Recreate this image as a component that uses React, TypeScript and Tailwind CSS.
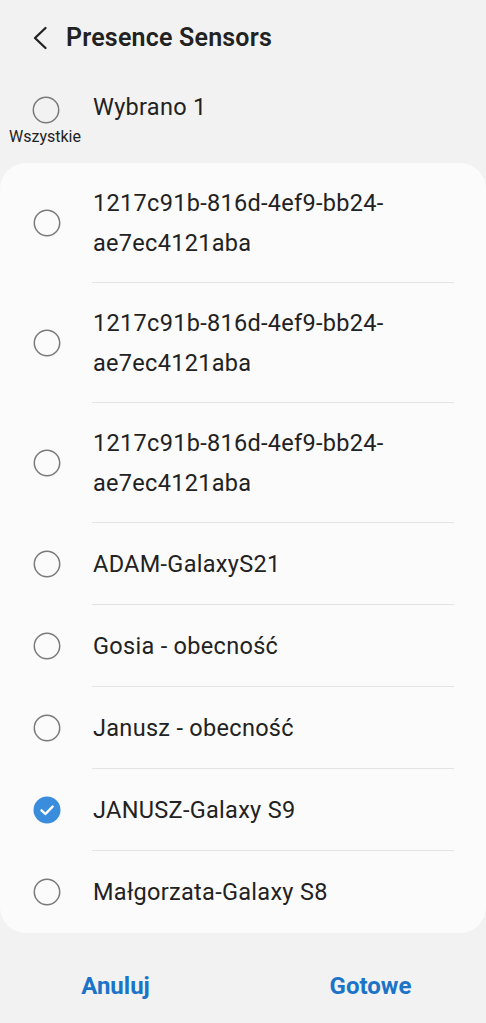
import React from "react";

type Item = { label: string[]; checked?: boolean };

const items: Item[] = [
  { label: ["1217c91b-816d-4ef9-bb24-", "ae7ec4121aba"] },
  { label: ["1217c91b-816d-4ef9-bb24-", "ae7ec4121aba"] },
  { label: ["1217c91b-816d-4ef9-bb24-", "ae7ec4121aba"] },
  { label: ["ADAM-GalaxyS21"] },
  { label: ["Gosia - obecność"] },
  { label: ["Janusz - obecność"] },
  { label: ["JANUSZ-Galaxy S9"], checked: true },
  { label: ["Małgorzata-Galaxy S8"] },
];

function Radio({ checked }: { checked?: boolean }) {
  if (checked) {
    return (
      <svg width="28" height="28" viewBox="0 0 28 28">
        <circle cx="14" cy="14" r="13.5" fill="#3a8ddd" />
        <path d="M8.5 14.3 L12.4 18 L19.6 10.6" fill="none" stroke="#fff" strokeWidth="2.4" strokeLinecap="round" strokeLinejoin="round" />
      </svg>
    );
  }
  return (
    <svg width="28" height="28" viewBox="0 0 28 28">
      <circle cx="14" cy="14" r="12.7" fill="none" stroke="#7a7a7a" strokeWidth="1.5" />
    </svg>
  );
}

export default function App() {
  return (
    <div className="w-[486px] h-[1023px] bg-[#f2f2f2] flex flex-col overflow-hidden" style={{ fontFamily: "Roboto, 'Noto Sans', sans-serif" }}>
      {/* Header */}
      <div className="h-[76px] flex items-center pl-[32px] pb-[1px]">
        <svg width="16" height="24" viewBox="0 0 16 24">
          <path d="M13.5 2 L3 12 L13.5 22" fill="none" stroke="#222" strokeWidth="2.3" strokeLinecap="round" strokeLinejoin="round" />
        </svg>
        <span className="ml-[18px] text-[25px] font-semibold text-[#222] tracking-[0.2px]">Presence Sensors</span>
      </div>
      {/* Select all */}
      <div className="h-[87px] flex">
        <div className="w-[92px] flex flex-col items-center pt-[20px]">
          <Radio />
          <span className="text-[16px] text-[#222] leading-[18px] mt-[4px] -ml-[2px]">Wszystkie</span>
        </div>
        <div className="pt-[16px] text-[23.5px] tracking-[0.3px] text-[#222] leading-[30px] pl-[1px]">Wybrano 1</div>
      </div>
      {/* Card */}
      <div className="bg-[#fbfbfb] rounded-[26px] flex flex-col">
        {items.map((it, i) => (
          <div key={i} className="flex items-center min-h-[82px]">
            <div className="w-[92px] flex justify-center pl-[1px] shrink-0">
              <Radio checked={it.checked} />
            </div>
            <div
              className={
                "flex-1 mr-[32px] self-stretch flex flex-col justify-center py-[19.5px] pl-[1px] " +
                (i < items.length - 1 ? "border-b border-[#e4e4e4]" : "")
              }
            >
              {it.label.map((l, j) => (
                <div key={j} className="text-[23.5px] tracking-[0.3px] leading-[40px] text-[#222]">{l}</div>
              ))}
            </div>
          </div>
        ))}
      </div>
      {/* Buttons */}
      <div className="flex justify-center gap-[55px] pt-[35px]">
        <div className="w-[200px] text-center text-[24px] font-bold text-[#1b74c8] leading-[36px]">Anuluj</div>
        <div className="w-[200px] text-center text-[24px] font-bold text-[#1b74c8] leading-[36px]">Gotowe</div>
      </div>
    </div>
  );
}
